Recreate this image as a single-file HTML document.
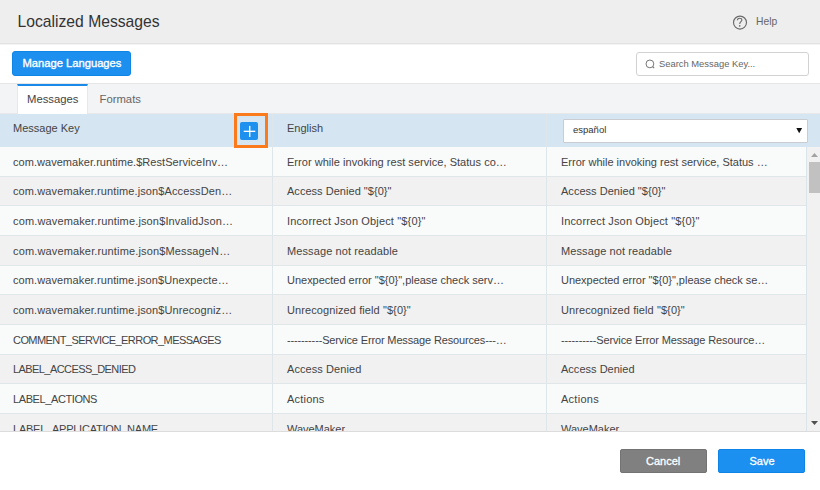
<!DOCTYPE html>
<html><head><meta charset="utf-8">
<style>
*{box-sizing:border-box;margin:0;padding:0}
html,body{width:820px;height:490px;overflow:hidden;background:#fff;font-family:"Liberation Sans",sans-serif;color:#444}
.abs{position:absolute}
.t{position:absolute;white-space:nowrap;line-height:1}
#hdr{left:0;top:0;width:820px;height:44px;background:#eeeeee;border-bottom:1px solid #e1e3e1}
#title{left:17.5px;top:14px;font-size:15.7px;color:#333}
#helpc{left:733px;top:15px;width:14px;height:14px;border:1px solid #666;border-radius:50%}
#helpt{left:756px;top:16.5px;font-size:10.3px;color:#666}
#tool{left:0;top:44px;width:820px;height:40px;background:linear-gradient(#f4f4f4 0,#f4f4f4 1px,#fff 1px);border-bottom:1px solid #e6e6e6}
#mlbtn{left:12px;top:51px;width:119px;height:25px;background:#1c8fef;border:1px solid #0f85e6;border-radius:3px}
#mltxt{left:22.5px;top:58.1px;font-size:11.2px;color:#fff;-webkit-text-stroke:0.35px #fff}
#search{left:636px;top:52px;width:173px;height:24px;border:1px solid #d2d2d2;border-radius:3px;background:#fff}
#stxt{left:659px;top:58.6px;font-size:9.4px;color:#666}
#tabs{left:0;top:84px;width:820px;height:30px;background:#f3f4f6;border-bottom:1px solid #e6e8ea}
#tab1{left:17px;top:84px;width:71px;height:30px;background:#fff;border-top:2px solid #1a8aea;border-left:1px solid #e8e8e8;border-right:1px solid #e8e8e8}
#tab1t{left:27px;top:93.6px;font-size:11.3px;color:#444}
#tab2t{left:99.5px;top:93.6px;font-size:11.3px;color:#666}
#th{left:0;top:114px;width:820px;height:33px;background:#d5e5f1}
#thk{left:13px;top:122.6px;font-size:11px;color:#444}
#the{left:287px;top:122.6px;font-size:11px;color:#444}
#orange{left:234px;top:113px;width:34px;height:35px;border:3px solid #fb7a1c}
#plus{left:240px;top:122px;width:18px;height:18px;background:#1e90ee;border-radius:2px}
#sel{left:563px;top:119px;width:245px;height:24px;background:#fff;border:1px solid #c9cdd1;border-radius:1px}
#selt{left:573px;top:125px;font-size:9.5px;color:#333}
#body{left:0;top:147px;width:807px;height:284px;overflow:hidden}
.row{position:absolute;left:0;width:806px;height:29.67px;border-bottom:1px solid #e1e6e9}
.row.o{background:#f9fafa}
.row.e{background:#f1f1f1}
.c{position:absolute;top:9.7px;font-size:11px;color:#444;white-space:nowrap;line-height:1}
.c1{left:13px}.c2{left:287px}.c3{left:561px}
.vl{position:absolute;top:114px;width:1px;height:317px;background:#dfe6ea}
#sb{left:807px;top:147px;width:13px;height:284px;background:#f1f1f1}
#thumb{left:809px;top:162px;width:11px;height:31px;background:#c1c1c1}
#foot{left:0;top:431px;width:820px;height:59px;background:#fff;border-top:1px solid #dcdcdc}
#cancel{left:620px;top:449px;width:87px;height:24px;background:#808080;border:1px solid #737373;border-radius:2px}
#save{left:718px;top:449px;width:87px;height:24px;background:#1b90f0;border:1px solid #0e84e6;border-radius:2px}
.bt{position:absolute;top:456px;font-size:11px;color:#fff;line-height:1;-webkit-text-stroke:0.3px #fff}
</style></head><body>
<div id="hdr" class="abs"></div>
<div id="title" class="t">Localized Messages</div>
<svg class="abs" style="left:732px;top:15px" width="16" height="16" viewBox="0 0 16 16"><circle cx="8" cy="7.6" r="6.5" fill="none" stroke="#6a6a6a" stroke-width="1.15"/><path d="M5.4 5.3 C5.4 3.9 6.4 3.2 7.6 3.2 C8.9 3.2 9.9 4 9.9 5.1 C9.9 6.6 7.7 6.9 7.7 8.9" fill="none" stroke="#6a6a6a" stroke-width="1.1"/><circle cx="7.7" cy="10.9" r="0.8" fill="#6a6a6a"/></svg>
<div id="helpt" class="t">Help</div>

<div id="tool" class="abs"></div>
<div id="mlbtn" class="abs"></div>
<div id="mltxt" class="t">Manage Languages</div>
<div id="search" class="abs"></div>
<svg class="abs" style="left:645px;top:58.5px" width="11" height="11" viewBox="0 0 11 11"><circle cx="4.9" cy="4.9" r="3.9" fill="none" stroke="#777" stroke-width="1"/><line x1="7.6" y1="7.6" x2="9.2" y2="9.2" stroke="#777" stroke-width="1.1"/></svg>
<div id="stxt" class="t">Search Message Key...</div>

<div id="tabs" class="abs"></div>
<div id="tab1" class="abs"></div>
<div id="tab1t" class="t">Messages</div>
<div id="tab2t" class="t">Formats</div>

<div id="th" class="abs"></div>
<div id="thk" class="t">Message Key</div>
<div id="the" class="t">English</div>

<div id="body" class="abs">
<div class="row o" style="top:0px"><span class="c c1" style="letter-spacing:0.043px">com.wavemaker.runtime.$RestServiceInv…</span><span class="c c2" style="letter-spacing:0.036px">Error while invoking rest service, Status co…</span><span class="c c3">Error while invoking rest service, Status …</span></div>
<div class="row e" style="top:29.67px"><span class="c c1" style="letter-spacing:0.111px">com.wavemaker.runtime.json$AccessDen…</span><span class="c c2" style="letter-spacing:0.032px">Access Denied "${0}"</span><span class="c c3" style="letter-spacing:0.032px">Access Denied "${0}"</span></div>
<div class="row o" style="top:59.33px"><span class="c c1" style="letter-spacing:0.142px">com.wavemaker.runtime.json$InvalidJson…</span><span class="c c2" style="letter-spacing:0.148px">Incorrect Json Object "${0}"</span><span class="c c3" style="letter-spacing:0.148px">Incorrect Json Object "${0}"</span></div>
<div class="row e" style="top:89px"><span class="c c1" style="letter-spacing:0.143px">com.wavemaker.runtime.json$MessageN…</span><span class="c c2" style="letter-spacing:0.105px">Message not readable</span><span class="c c3" style="letter-spacing:0.105px">Message not readable</span></div>
<div class="row o" style="top:118.67px"><span class="c c1" style="letter-spacing:0.100px">com.wavemaker.runtime.json$Unexpecte…</span><span class="c c2" style="letter-spacing:-0.015px">Unexpected error "${0}",please check serv…</span><span class="c c3" style="letter-spacing:-0.026px">Unexpected error "${0}",please check se…</span></div>
<div class="row e" style="top:148.33px"><span class="c c1" style="letter-spacing:0.108px">com.wavemaker.runtime.json$Unrecogniz…</span><span class="c c2" style="letter-spacing:0.092px">Unrecognized field "${0}"</span><span class="c c3" style="letter-spacing:0.092px">Unrecognized field "${0}"</span></div>
<div class="row o" style="top:178px"><span class="c c1" style="letter-spacing:-0.566px">COMMENT_SERVICE_ERROR_MESSAGES</span><span class="c c2" style="letter-spacing:-0.146px">----------Service Error Message Resources---…</span><span class="c c3" style="letter-spacing:-0.135px">----------Service Error Message Resource…</span></div>
<div class="row e" style="top:207.67px"><span class="c c1" style="letter-spacing:-0.578px">LABEL_ACCESS_DENIED</span><span class="c c2" style="letter-spacing:0.083px">Access Denied</span><span class="c c3" style="letter-spacing:0.017px">Access Denied</span></div>
<div class="row o" style="top:237.33px"><span class="c c1" style="letter-spacing:-0.400px">LABEL_ACTIONS</span><span class="c c2" style="letter-spacing:0.200px">Actions</span><span class="c c3" style="letter-spacing:0.267px">Actions</span></div>
<div class="row e" style="top:267px"><span class="c c1" style="letter-spacing:-0.238px">LABEL_APPLICATION_NAME</span><span class="c c2" style="letter-spacing:-0.025px">WaveMaker</span><span class="c c3">WaveMaker</span></div>
</div>
<div class="vl" style="left:272px"></div>
<div class="vl" style="left:546px"></div>
<div class="vl" style="left:806px;top:147px;height:284px;background:#d9e4eb"></div>

<div id="orange" class="abs"></div>
<div id="plus" class="abs"></div>
<svg class="abs" style="left:240px;top:122px" width="18" height="18" viewBox="0 0 18 18"><rect x="9.05" y="3.9" width="1.35" height="11.1" fill="#fff"/><rect x="3.7" y="8.65" width="11.6" height="1.35" fill="#fff"/></svg>

<div id="sel" class="abs"></div>
<div id="selt" class="t">español</div>
<svg class="abs" style="left:796px;top:127px" width="7" height="7" viewBox="0 0 7 7"><path d="M0.3 1 L6.1 1 L3.2 6.2 Z" fill="#111"/></svg>

<div id="sb" class="abs"></div>
<svg class="abs" style="left:810px;top:152px" width="9" height="6" viewBox="0 0 9 6"><path d="M1 5 L8 5 L4.5 1 Z" fill="#a3a3a3"/></svg>
<div id="thumb" class="abs"></div>
<svg class="abs" style="left:810px;top:420px" width="9" height="6" viewBox="0 0 9 6"><path d="M1 1 L8 1 L4.5 5 Z" fill="#505050"/></svg>

<div id="foot" class="abs"></div>
<div id="cancel" class="abs"></div>
<div class="bt" style="left:646px">Cancel</div>
<div id="save" class="abs"></div>
<div class="bt" style="left:749.5px">Save</div>
</body></html>
